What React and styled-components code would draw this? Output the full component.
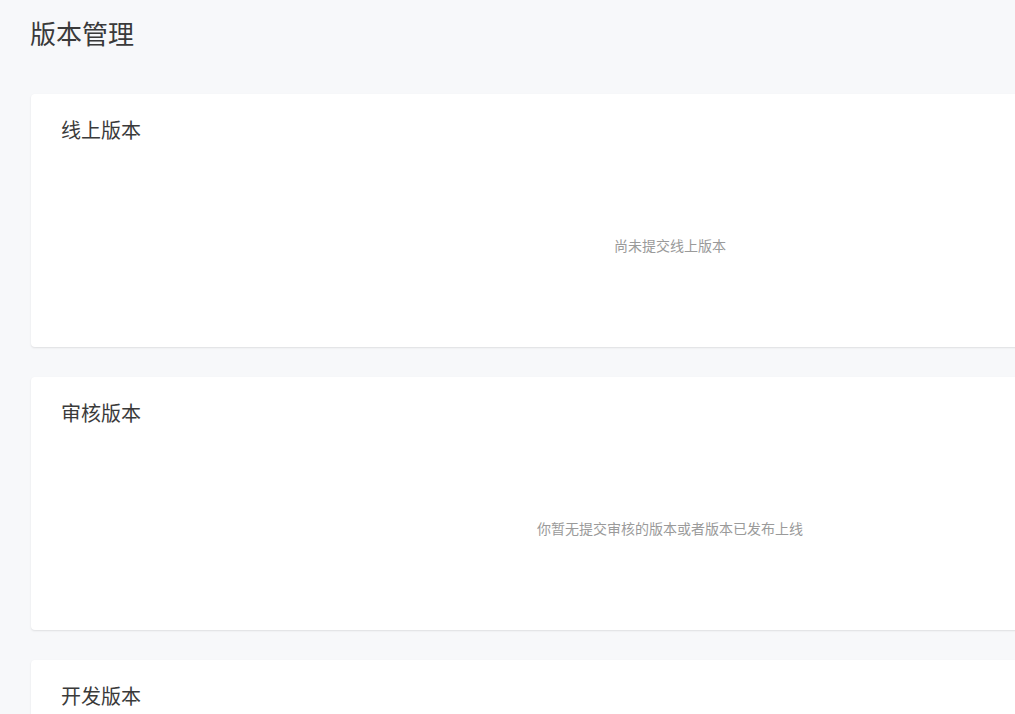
import React from 'react';
import styled, { createGlobalStyle } from 'styled-components';

const GlobalStyle = createGlobalStyle`
  html, body {
    margin: 0;
    padding: 0;
    background: #f7f8fa;
    overflow-x: hidden;
  }
  body {
    font-family: "Noto Sans CJK SC", "Noto Sans", sans-serif;
  }
`;

const sections = [
  { title: '线上版本', empty: '尚未提交线上版本' },
  { title: '审核版本', empty: '你暂无提交审核的版本或者版本已发布上线' },
  { title: '开发版本', empty: '尚未提交开发版本' },
];

export default function App() {
  return (
    <>
      <GlobalStyle />
      <Page>
        <PageTitle>版本管理</PageTitle>
        <CardList>
          {sections.map((s) => (
            <Card key={s.title}>
              <CardTitle>{s.title}</CardTitle>
              <Empty>{s.empty}</Empty>
            </Card>
          ))}
        </CardList>
      </Page>
    </>
  );
}

const Page = styled.div`
  padding: 15px 0 40px 30px;
`;
const PageTitle = styled.h1`
  margin: 0 0 43px;
  font-size: 26px;
  font-weight: 400;
  line-height: 36px;
  color: #3a3a3a;
`;
const CardList = styled.div`
  display: flex;
  flex-direction: column;
  gap: 30px;
`;
const Card = styled.section`
  width: 1278px;
  height: 253px;
  margin-left: 1px;
  box-sizing: border-box;
  padding: 22px 30px 0;
  background: #fff;
  border-radius: 4px;
  box-shadow: 0 1px 2px rgba(0, 0, 0, 0.1);
  display: flex;
  flex-direction: column;
`;
const CardTitle = styled.h2`
  margin: 0;
  font-size: 20px;
  font-weight: 400;
  line-height: 28px;
  color: #3a3a3a;
`;
const Empty = styled.div`
  flex: 1;
  display: flex;
  align-items: center;
  justify-content: center;
  font-size: 14px;
  color: #9a9a9a;
  padding-bottom: 1px;
`;
